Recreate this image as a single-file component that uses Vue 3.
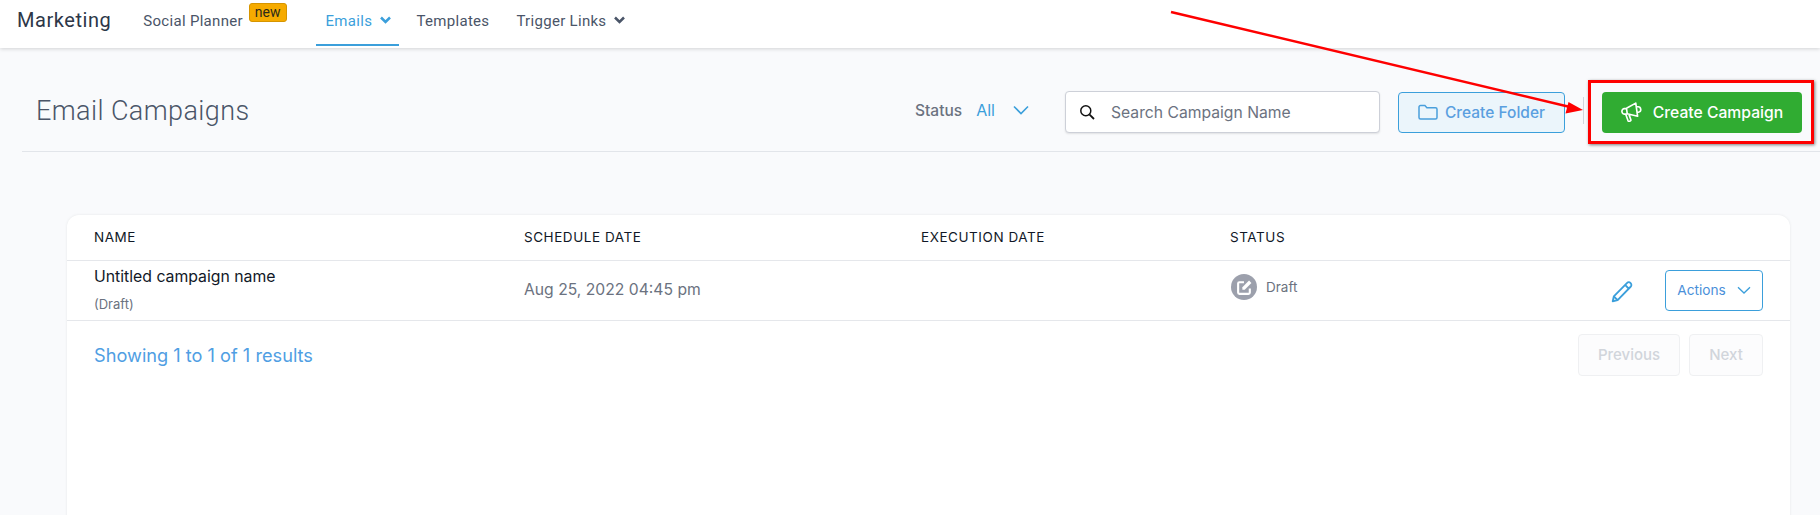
<script setup>
const columns = ['Name', 'Schedule Date', 'Execution Date', 'Status']
</script>

<template>
  <div class="page">
    <nav class="nav">
      <span class="brand">Marketing</span>
      <a class="tab planner">Social Planner<span class="new">new</span></a>
      <a class="tab active">Emails
        <svg class="caret" width="11" height="8" viewBox="0 0 11 8"><path d="M1 1.500 5.500 6 10 1.500" fill="none" stroke="currentColor" stroke-width="2.500"/></svg>
      </a>
      <a class="tab templates">Templates</a>
      <a class="tab">Trigger Links
        <svg class="caret" width="11" height="8" viewBox="0 0 11 8"><path d="M1 1.500 5.500 6 10 1.500" fill="none" stroke="currentColor" stroke-width="2.500"/></svg>
      </a>
    </nav>

    <main class="content">
      <header class="head">
        <h1>Email Campaigns</h1>
        <div class="status-filter">
          <span class="status-label">Status</span>
          <span class="status-value">All</span>
          <svg width="16" height="10" viewBox="0 0 16 10"><path d="M1 1.500 8 8.500 15 1.500" fill="none" stroke="#3b9fdb" stroke-width="1.600"/></svg>
        </div>
        <label class="search">
          <svg width="16" height="16" viewBox="0 0 16 16"><circle cx="6.800" cy="6.800" r="5" fill="none" stroke="#111" stroke-width="1.500"/><path d="M10.600 10.600 15 15" stroke="#111" stroke-width="1.800"/></svg>
          <span>Search Campaign Name</span>
        </label>
        <button class="folder">
          <svg width="20" height="16" viewBox="0 0 20 16"><path d="M1 3a1.500 1.500 0 0 1 1.500-1.500h4.400l2 2.200h8.600A1.500 1.500 0 0 1 19 5.200v8.300a1.500 1.500 0 0 1-1.500 1.500h-15A1.500 1.500 0 0 1 1 13.500z" fill="none" stroke="#4a9fdc" stroke-width="1.500"/></svg>
          Create Folder
        </button>
        <span class="sep"></span>
        <button class="create">
          <svg width="22" height="22" viewBox="0 0 20 20"><path transform="rotate(-8 10 10)" d="M14.500 2.500 5.500 6H3.300A2.300 2.300 0 0 0 1 8.300v.4A2.300 2.300 0 0 0 3.300 11h2.200l9 3.500zM5.500 6v5M4 11l1.300 6.200a1.100 1.100 0 0 0 1.100.8h.6a1 1 0 0 0 1-1.200L7 12M14.500 6h1.200a2.500 2.500 0 0 1 0 5h-1.200" fill="none" stroke="#fff" stroke-width="1.500" stroke-linejoin="round"/></svg>
          Create Campaign
        </button>
      </header>

      <section class="card">
        <div class="grid header-row">
          <span v-for="c in columns" :key="c">{{ c }}</span>
        </div>
        <div class="grid body-row">
          <div class="name-cell">
            <div class="name">Untitled campaign name</div>
            <div class="sub">(Draft)</div>
          </div>
          <div class="date">Aug 25, 2022 04:45 pm</div>
          <div></div>
          <div class="draft">
            <span class="draft-icon">
              <svg width="17" height="17" viewBox="0 0 16 16"><path d="M7.500 3H3.200A1.200 1.200 0 0 0 2 4.200v8.600A1.200 1.200 0 0 0 3.200 14h8.600a1.200 1.200 0 0 0 1.200-1.200V9" fill="none" stroke="#fff" stroke-width="2"/><path d="M6 10V7.800L12.300 1.500l2.200 2.200L8.200 10z" fill="#fff"/></svg>
            </span>
            <span class="draft-text">Draft</span>
          </div>
          <div class="row-actions">
            <svg class="pencil" width="24" height="24" viewBox="0 0 22 22"><path d="M2.500 19.500 3.500 15 15.500 2.800a2.400 2.400 0 0 1 3.400 3.400L7 18.500zM3.500 15 7 18.500M13.800 4.500l3.500 3.500" fill="none" stroke="#3b9fdb" stroke-width="1.700" stroke-linejoin="round"/></svg>
            <button class="actions">Actions
              <svg width="14" height="8" viewBox="0 0 14 8"><path d="M1 1.200 7 7 13 1.200" fill="none" stroke="#3b9fdb" stroke-width="1.300"/></svg>
            </button>
          </div>
        </div>
        <div class="footer">
          <span class="results">Showing 1 to 1 of 1 results</span>
          <div class="pager">
            <button class="page-btn prev">Previous</button>
            <button class="page-btn next">Next</button>
          </div>
        </div>
      </section>
    </main>

    <div class="highlight"></div>
    <svg class="arrow" width="1820" height="515" viewBox="0 0 1820 515">
      <line x1="1171" y1="12" x2="1570" y2="107" stroke="#fe0000" stroke-width="2.500"/>
      <path d="M1583 110 1568.500 102 1565.500 113.500z" fill="#fe0000"/>
    </svg>
  </div>
</template>

<style>
html, body { margin: 0; background: #f9fafc; overflow: hidden; }
</style>

<style scoped>
.page {
  position: relative;
  width: 1820px;
  height: 515px;
  overflow: hidden;
  background: #f9fafc;
  font-family: Inter, "Liberation Sans", sans-serif;
}
.nav {
  display: flex;
  align-items: flex-start;
  height: 48px;
  padding-left: 17px;
  background: #fff;
  box-shadow: 0 1px 4px rgba(0, 0, 0, 0.16);
  font-family: Roboto, "Liberation Sans", sans-serif;
}
.brand {
  margin: 8px 32px 0 0;
  font-size: 20px;
  line-height: 24px;
  font-weight: 400;
  color: #2d3748;
  letter-spacing: 0.55px;
}
.tab {
  display: flex;
  align-items: center;
  gap: 8px;
  padding: 0 10px 4px;
  height: 46px;
  font-size: 15px;
  font-weight: 400;
  color: #4a5568;
  letter-spacing: 0.3px;
  box-sizing: border-box;
  white-space: nowrap;
}
.planner { margin-right: 29px; padding-right: 0; padding-left: 0; gap: 6px; }
.new {
  align-self: flex-start;
  margin-top: 3px;
  padding: 0 5px;
  height: 19px;
  line-height: 17px;
  box-sizing: border-box;
  background: #f6ab00;
  border: 1px solid #d69500;
  border-radius: 3px;
  font-size: 14px;
  font-weight: 400;
  letter-spacing: 0;
  color: #2d2a1a;
}
.active {
  color: #3b9fdb;
  border-bottom: 2px solid #3b9fdb;
  width: 83px;
  padding: 0 0 2px 10px;
  margin-right: 8px;
}
.caret { flex-shrink: 0; margin-top: -3px; }
.templates { margin-right: 7px; }
.head {
  display: flex;
  align-items: center;
  height: 104px;
  margin-left: 22px;
  padding: 26px 18px 1px 0;
  box-sizing: border-box;
  border-bottom: 1px solid #e2e5ea;
}
h1 {
  flex: 1;
  margin: -2px 0 0 14px;
  font-family: Roboto, "Liberation Sans", sans-serif;
  font-size: 27px;
  font-weight: 300;
  color: #4a5568;
  letter-spacing: 0.4px;
}
.status-filter {
  display: flex;
  align-items: center;
  width: 150px;
  margin-top: -4px;
  font-size: 15.500px;
}
.status-label { color: #6b7280; font-weight: 500; }
.status-value { margin: 0 18px 0 14px; color: #3b9fdb; font-size: 16px; }
.search {
  display: flex;
  align-items: center;
  gap: 16px;
  width: 315px;
  height: 42px;
  padding-left: 13px;
  box-sizing: border-box;
  background: #fff;
  border: 1px solid #cdd0d8;
  border-radius: 4px;
  box-shadow: 0 1px 2px rgba(0, 0, 0, 0.1);
  font-size: 15.700px;
  color: #6b7280;
}
button { font-family: inherit; cursor: pointer; }
.folder {
  display: flex;
  align-items: center;
  justify-content: center;
  gap: 7px;
  width: 167px;
  height: 41px;
  margin-left: 18px;
  padding: 0;
  background: #ebf5fb;
  border: 1px solid #3b9fdb;
  border-radius: 4px;
  font-size: 15.500px;
  font-weight: 500;
  color: #5a9fe0;
}
.sep {
  width: 1px;
  height: 27px;
  margin: -3px 18px 0;
  background: #d1d5db;
}
.create {
  display: flex;
  align-items: center;
  justify-content: center;
  gap: 10px;
  width: 200px;
  height: 41px;
  padding: 0;
  background: #30ac32;
  border: 0;
  border-radius: 4px;
  font-size: 15.700px;
  font-weight: 500;
  color: #fff;
}
.card {
  width: 1723px;
  height: 400px;
  margin: 63px 0 0 67px;
  background: #fff;
  border-radius: 12px 12px 0 0;
  box-shadow: 0 0 3px rgba(0, 0, 0, 0.08);
}
.grid {
  display: grid;
  grid-template-columns: 430px 397px 309px 1fr;
  padding-left: 27px;
  border-bottom: 1px solid #e5e7eb;
}
.header-row {
  align-items: center;
  height: 46px;
  padding-bottom: 2px;
  box-sizing: border-box;
  font-size: 13.500px;
  font-weight: 400;
  letter-spacing: 0.55px;
  text-transform: uppercase;
  color: #111827;
}
.body-row {
  grid-template-columns: 430px 397px 309px 1fr auto;
  align-items: center;
  height: 60px;
  box-sizing: border-box;
}
.name-cell { margin-top: -3px; }
.name { font-size: 15.800px; color: #111827; }
.sub { margin-top: 10px; font-size: 13px; color: #6b7280; }
.date { margin-top: -2px; font-size: 15.700px; color: #6b7280; }
.draft { display: flex; align-items: center; gap: 9px; margin: -7px 0 0 1px; }
.draft-icon {
  display: flex;
  align-items: center;
  justify-content: center;
  width: 26px;
  height: 26px;
  border-radius: 50%;
  background: #9ca0ac;
}
.draft-text { font-size: 13.500px; color: #6b7280; }
.row-actions {
  display: flex;
  align-items: center;
  gap: 31px;
  margin-right: 27px;
}
.pencil { margin-top: 3px; }
.actions {
  display: flex;
  align-items: center;
  justify-content: center;
  gap: 11px;
  width: 98px;
  height: 41px;
  padding: 0 0 2px;
  background: #fff;
  border: 1px solid #3b9fdb;
  border-radius: 4px;
  font-size: 13.700px;
  color: #4a90d9;
}
.footer {
  display: flex;
  align-items: center;
  justify-content: space-between;
  padding: 13px 27px 0;
}
.results { font-size: 18.200px; color: #4f9ee3; }
.pager { display: flex; gap: 9px; }
.page-btn {
  height: 42px;
  padding: 0 0 2px;
  background: #fcfcfd;
  border: 1px solid #eff0f2;
  border-radius: 4px;
  font-size: 15px;
  font-weight: 500;
  color: #d1d5db;
}
.prev { width: 102px; }
.next { width: 74px; }
.highlight {
  position: absolute;
  left: 1588px;
  top: 80px;
  width: 226px;
  height: 64px;
  box-sizing: border-box;
  border: 3px solid #fe0000;
  box-shadow: 1px 1px 3px rgba(0, 0, 0, 0.5);
}
.arrow {
  position: absolute;
  left: 0;
  top: 0;
  pointer-events: none;
}
</style>
